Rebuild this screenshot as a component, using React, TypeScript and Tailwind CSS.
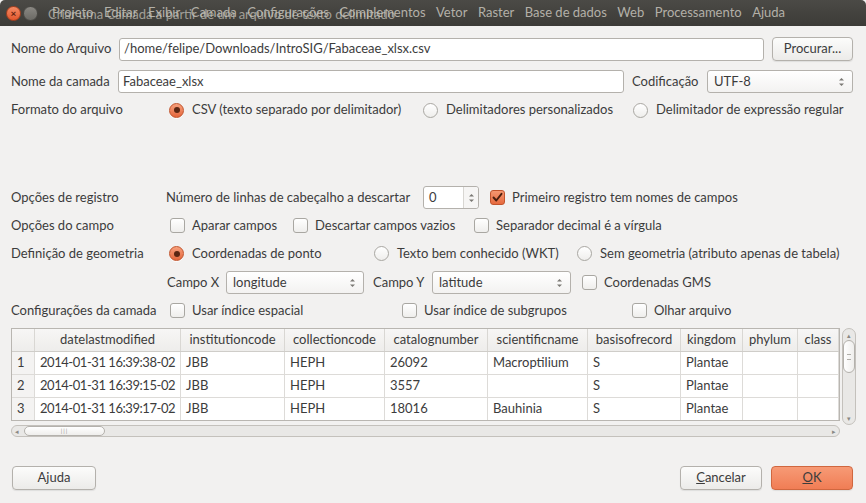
import React from 'react';

const font = { fontFamily: 'Lato, "Open Sans", sans-serif' };

const Radio = ({ checked }: { checked?: boolean }) =>
  checked ? (
    <span className="w-[15px] h-[15px] rounded-full border border-[#c2542c] bg-gradient-to-b from-[#f7a07c] to-[#e3663b] flex items-center justify-center shrink-0 shadow-[0_1px_0_rgba(255,255,255,0.8)]">
      <span className="w-[6px] h-[6px] rounded-full bg-[#5b2612]" />
    </span>
  ) : (
    <span className="w-[15px] h-[15px] rounded-full border border-[#a9a7a2] bg-gradient-to-b from-[#ffffff] to-[#efeeec] shrink-0" />
  );

const Check = ({ checked }: { checked?: boolean }) =>
  checked ? (
    <span className="w-[15px] h-[15px] rounded-[3px] border border-[#c2542c] bg-gradient-to-b from-[#f59670] to-[#e66a3e] flex items-center justify-center shrink-0">
      <svg width="11" height="11" viewBox="0 0 11 11">
        <path d="M1.5 5.5 L4.3 8.5 L9.5 1.8" fill="none" stroke="#4a1f0f" strokeWidth="1.9" strokeLinecap="round" strokeLinejoin="round" />
      </svg>
    </span>
  ) : (
    <span className="w-[15px] h-[15px] rounded-[3px] border border-[#a9a7a2] bg-gradient-to-b from-[#ffffff] to-[#efeeec] shrink-0" />
  );

const Arrows = () => (
  <svg width="7" height="12" viewBox="0 0 7 12" className="shrink-0">
    <path d="M1 4.5 L3.5 2 L6 4.5 Z" fill="#7a7874" />
    <path d="M1 7.5 L3.5 10 L6 7.5 Z" fill="#7a7874" />
  </svg>
);

const Select = ({ value, w }: { value: string; w: string }) => (
  <div className={`${w} h-[23px] rounded-[3px] border border-[#b4b1ac] bg-gradient-to-b from-[#ffffff] to-[#f3f2f1] flex items-center pl-[6px] pr-[7px] justify-between`}>
    <span>{value}</span>
    <Arrows />
  </div>
);

const Btn = ({ children, w, primary }: { children: React.ReactNode; w: string; primary?: boolean }) => (
  <div
    className={`${w} h-[24px] rounded-[4px] border flex items-center justify-center ${
      primary
        ? 'border-[#d0673f] bg-gradient-to-b from-[#f79a75] to-[#f07d55] text-[#3c3c3c]'
        : 'border-[#b4b1ac] bg-gradient-to-b from-[#fcfcfb] to-[#ecebe9]'
    } shadow-[0_1px_1px_rgba(0,0,0,0.08)]`}
  >
    {children}
  </div>
);

const menu = ['Projeto', 'Editar', 'Exibir', 'Camada', 'Configurações', 'Complementos', 'Vetor', 'Raster', 'Base de dados', 'Web', 'Processamento', 'Ajuda'];

const cols = [
  { h: '', w: 23 },
  { h: 'datelastmodified', w: 146 },
  { h: 'institutioncode', w: 104 },
  { h: 'collectioncode', w: 100 },
  { h: 'catalognumber', w: 103 },
  { h: 'scientificname', w: 100 },
  { h: 'basisofrecord', w: 93 },
  { h: 'kingdom', w: 62 },
  { h: 'phylum', w: 55 },
  { h: 'class', w: 41 },
];

const rows = [
  ['1', '2014-01-31 16:39:38-02', 'JBB', 'HEPH', '26092', 'Macroptilium', 'S', 'Plantae', '', ''],
  ['2', '2014-01-31 16:39:15-02', 'JBB', 'HEPH', '3557', '', 'S', 'Plantae', '', ''],
  ['3', '2014-01-31 16:39:17-02', 'JBB', 'HEPH', '18016', 'Bauhinia', 'S', 'Plantae', '', ''],
];

export default function App() {
  return (
    <div className="w-[866px] h-[503px] bg-[#f2f1f0] text-[13px] text-[#3c3c3c] flex flex-col overflow-hidden" style={font}>
      {/* Title bar */}
      <div className="relative h-[26px] shrink-0 bg-gradient-to-b from-[#4b4a46] to-[#3c3b37] flex items-center text-[#b3b0a8] rounded-t-[5px]">
        <span className="ml-[6px] w-[15px] h-[15px] rounded-full bg-gradient-to-b from-[#f48a63] to-[#e2572c] border border-[#a8401f] flex items-center justify-center text-[#5e220f] text-[10px] font-bold leading-none">
          ×
        </span>
        <span className="ml-[2px] w-[15px] h-[15px] rounded-full bg-gradient-to-b from-[#8a8883] to-[#6b6a65] border border-[#4a4945]" />
        <div className="ml-[14px] flex gap-[10.5px] whitespace-nowrap">
          {menu.map((m) => (
            <span key={m}>{m}</span>
          ))}
        </div>
        <span className="absolute left-[48px] top-[5px] whitespace-nowrap text-[#c9c6be] opacity-70">
          Criar uma Camada a partir de um arquivo de texto delimitado
        </span>
      </div>

      <div className="flex flex-col pl-[11px] pr-[13px]">
        {/* Nome do arquivo */}
        <div className="mt-[11px] h-[24px] flex items-center">
          <span className="w-[108px] shrink-0">Nome do Arquivo</span>
          <div className="flex-1 h-[23px] border border-[#b4b1ac] rounded-[3px] bg-white flex items-center pl-[4px]">
            /home/felipe/Downloads/IntroSIG/Fabaceae_xlsx.csv
          </div>
          <div className="ml-[8px]">
            <Btn w="w-[81px]">Procurar...</Btn>
          </div>
        </div>

        {/* Nome da camada */}
        <div className="mt-[9px] h-[23px] flex items-center">
          <span className="w-[107px] shrink-0">Nome da camada</span>
          <div className="w-[506px] h-[23px] border border-[#b4b1ac] rounded-[3px] bg-white flex items-center pl-[4px]">
            Fabaceae_xlsx
          </div>
          <span className="ml-[8px] w-[75px]">Codificação</span>
          <Select value="UTF-8" w="flex-1" />
        </div>

        {/* Formato */}
        <div className="mt-[6px] h-[22px] flex items-center">
          <span className="w-[158px] shrink-0">Formato do arquivo</span>
          <div className="w-[254px] flex items-center gap-[8px]">
            <Radio checked />
            <span>CSV (texto separado por delimitador)</span>
          </div>
          <div className="w-[210px] flex items-center gap-[8px]">
            <Radio />
            <span>Delimitadores personalizados</span>
          </div>
          <div className="flex items-center gap-[8px]">
            <Radio />
            <span className="whitespace-nowrap">Delimitador de expressão regular</span>
          </div>
        </div>

        {/* Opções de registro */}
        <div className="mt-[65px] h-[23px] flex items-center">
          <span className="w-[155px] shrink-0">Opções de registro</span>
          <span className="w-[257px]">Número de linhas de cabeçalho a descartar</span>
          <div className="w-[56px] h-[23px] border border-[#b4b1ac] rounded-[3px] bg-white flex items-center justify-between pl-[5px]">
            <span>0</span>
            <div className="h-full w-[15px] border-l border-[#d8d6d2] bg-[#f6f5f4] flex items-center justify-center rounded-r-[3px]">
              <Arrows />
            </div>
          </div>
          <div className="ml-[11px] flex items-center gap-[7px]">
            <Check checked />
            <span>Primeiro registro tem nomes de campos</span>
          </div>
        </div>

        {/* Opções do campo */}
        <div className="mt-[5px] h-[23px] flex items-center">
          <span className="w-[159px] shrink-0">Opções do campo</span>
          <div className="w-[123px] flex items-center gap-[7px]">
            <Check />
            <span>Aparar campos</span>
          </div>
          <div className="w-[181px] flex items-center gap-[7px]">
            <Check />
            <span>Descartar campos vazios</span>
          </div>
          <div className="flex items-center gap-[7px]">
            <Check />
            <span>Separador decimal é a vírgula</span>
          </div>
        </div>

        {/* Definição de geometria */}
        <div className="mt-[5px] h-[23px] flex items-center">
          <span className="w-[158px] shrink-0">Definição de geometria</span>
          <div className="w-[205px] flex items-center gap-[8px]">
            <Radio checked />
            <span>Coordenadas de ponto</span>
          </div>
          <div className="w-[203px] flex items-center gap-[8px]">
            <Radio />
            <span>Texto bem conhecido (WKT)</span>
          </div>
          <div className="flex items-center gap-[8px]">
            <Radio />
            <span className="whitespace-nowrap">Sem geometria (atributo apenas de tabela)</span>
          </div>
        </div>

        {/* Campos X/Y */}
        <div className="mt-[6px] h-[23px] flex items-center">
          <span className="w-[156px] shrink-0" />
          <span className="w-[59px]">Campo X</span>
          <Select value="longitude" w="w-[138px]" />
          <span className="ml-[9px] w-[59px]">Campo Y</span>
          <Select value="latitude" w="w-[139px]" />
          <div className="ml-[11px] flex items-center gap-[7px]">
            <Check />
            <span>Coordenadas GMS</span>
          </div>
        </div>

        {/* Configurações da camada */}
        <div className="mt-[5px] h-[23px] flex items-center">
          <span className="w-[159px] shrink-0 whitespace-nowrap">Configurações da camada</span>
          <div className="w-[232px] flex items-center gap-[7px]">
            <Check />
            <span>Usar índice espacial</span>
          </div>
          <div className="w-[230px] flex items-center gap-[7px]">
            <Check />
            <span>Usar índice de subgrupos</span>
          </div>
          <div className="flex items-center gap-[7px]">
            <Check />
            <span>Olhar arquivo</span>
          </div>
        </div>

        {/* Table */}
        <div className="mt-[6px] flex">
          <div className="w-[829px] flex flex-col">
            <div className="h-[93px] border border-[#b9b6b1] bg-white overflow-hidden">
              <div className="flex h-[23px] bg-gradient-to-b from-[#f7f6f5] to-[#eeedeb] border-b border-[#cfcdc9]">
                {cols.map((c, i) => (
                  <div
                    key={i}
                    style={{ width: c.w }}
                    className="shrink-0 border-r border-[#d9d7d3] flex items-center justify-center whitespace-nowrap overflow-hidden"
                  >
                    {c.h}
                  </div>
                ))}
              </div>
              {rows.map((r, ri) => (
                <div key={ri} className="flex h-[23px] border-b border-[#dddbd8]">
                  {r.map((v, ci) => (
                    <div
                      key={ci}
                      style={{ width: cols[ci].w }}
                      className={`shrink-0 border-r border-[#dddbd8] flex items-center pl-[5px] whitespace-nowrap overflow-hidden ${
                        ci === 0 ? 'bg-[#f4f3f2]' : ''
                      } ${ci === 1 ? 'tracking-[-0.45px]' : ''}`}
                    >
                      {v}
                    </div>
                  ))}
                </div>
              ))}
            </div>
            {/* horizontal scrollbar */}
            <div className="mt-[4px] h-[12px] rounded-full border border-[#c4c1bc] bg-[#e9e8e6] flex items-center relative">
              <span className="absolute left-[3px] top-[1px] text-[7px] leading-[9px] text-[#8a8884]">◂</span>
              <div className="ml-[12px] w-[81px] h-[10px] rounded-full border border-[#b4b1ac] bg-gradient-to-b from-[#ffffff] to-[#efeeec] flex items-center justify-center">
                <span className="text-[6px] leading-none text-[#9a9894] tracking-[1px]">|||</span>
              </div>
              <span className="absolute right-[3px] top-[1px] text-[7px] leading-[9px] text-[#8a8884]">▸</span>
            </div>
          </div>
          {/* vertical scrollbar */}
          <div className="ml-[2px] w-[14px] h-[97px] rounded-full border border-[#c4c1bc] bg-[#e9e8e6] flex flex-col items-center relative">
            <span className="absolute top-[2px] text-[7px] leading-[8px] text-[#8a8884]">▴</span>
            <div className="mt-[11px] w-[12px] h-[33px] rounded-full border border-[#b4b1ac] bg-gradient-to-r from-[#ffffff] to-[#efeeec] flex items-center justify-center">
              <span className="w-[4px] h-[6px] border-y border-[#b0aea9]" />
            </div>
            <span className="absolute bottom-[2px] text-[7px] leading-[8px] text-[#8a8884]">▾</span>
          </div>
        </div>

        {/* Bottom buttons */}
        <div className="mt-[29px] flex items-center">
          <div className="ml-[1px]">
            <Btn w="w-[84px]">Ajuda</Btn>
          </div>
          <div className="ml-auto flex gap-[9px]">
            <Btn w="w-[82px]">
              <span>
                <span className="underline">C</span>ancelar
              </span>
            </Btn>
            <Btn w="w-[82px]" primary>
              <span>
                <span className="underline">O</span>K
              </span>
            </Btn>
          </div>
        </div>
      </div>
    </div>
  );
}
